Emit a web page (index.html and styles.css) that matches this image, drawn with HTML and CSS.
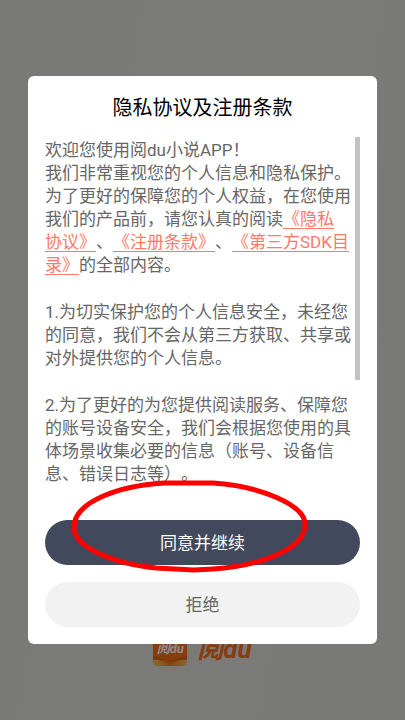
FILE: index.html
```
<!DOCTYPE html>
<html lang="zh-CN">
<head>
	<meta charset="UTF-8">
	<meta name="viewport" content="width=device-width, initial-scale=1">
	<title>阅du</title>
	<link rel="stylesheet" href="styles.css">
</head>
<body>
	<div class="splash">
		<div class="brand">
			<div class="brand_icon">
				<svg class="brand_shape" viewBox="0 0 34 34" aria-hidden="true">
					<defs>
						<linearGradient id="gold" x1="0" x2="1" y1="0" y2="0">
							<stop offset="0" stop-color="#ffc040"/>
							<stop offset=".5" stop-color="#e8842c"/>
							<stop offset="1" stop-color="#ffc040"/>
						</linearGradient>
					</defs>
					<rect width="34" height="34" rx="6" fill="#f5701e"/>
					<path d="M0 24 Q9 25 17 30 Q25 25 34 24 V28 H0 Z" fill="#e0621c"/>
					<path d="M0 28 Q9 27 17 33 Q25 27 34 28 Q34 34 28 34 H6 Q0 34 0 28 Z" fill="url(#gold)"/>
				</svg>
				<span class="brand_small">阅du</span>
			</div>
			<span class="brand_name">阅du</span>
		</div>
	</div>

	<div class="mask">
		<div class="dialog" role="dialog" aria-labelledby="title">
			<h1 class="title" id="title">隐私协议及注册条款</h1>
			<div class="policy">
				<div class="policy_text">
					<p>欢迎您使用阅du小说APP！<br>
					我们非常重视您的个人信息和隐私保护。<br>
					为了更好的保障您的个人权益，在您使用我们的产品前，请您认真的阅读<a href="#">《隐私<br>协议》</a>、<a href="#">《注册条款》</a>、<a href="#">《第三方SDK目录》</a>的全部内容。</p>
					<p>1.为切实保护您的个人信息安全，未经您的同意，我们不会从第三方获取、共享或对外提供您的个人信息。</p>
					<p>2.为了更好的为您提供阅读服务、保障您的账号设备安全，我们会根据您使用的具体场景收集必要的信息（账号、设备信息、错误日志等）。</p>
				</div>
				<div class="policy_bar"></div>
			</div>
			<div class="buttons">
				<div class="agree_wrap">
					<button type="button" class="btn agree">同意并继续</button>
					<svg class="circle" width="240" height="96" viewBox="0 0 240 96" aria-hidden="true">
						<path d="M94 5 H143 C190 8 235 27 235 46 C236 72 188 88 143 91 L124 92 L86 90 C38 85 4 67 4 50 C3 25 46 8 94 5 Z"/>
					</svg>
				</div>
				<button type="button" class="btn refuse">拒绝</button>
			</div>
		</div>
	</div>
</body>
</html>
```

FILE: styles.css
```
* {
	box-sizing: border-box;
}
body {
	margin: 0;
	font-family: Roboto, "Noto Sans CJK SC", sans-serif;
	font-size: 17px;
	line-height: 23px;
	color: #666;
	text-spacing-trim: space-all;
}
.splash {
	display: flex;
	flex-direction: column;
	justify-content: flex-end;
	align-items: center;
	min-height: 100vh;
	padding-bottom: 54px;
	background: linear-gradient(100deg, #dcdcd6, #dfdfda 50%, #dcdcda);
}
.brand {
	display: flex;
	align-items: center;
	gap: 10px;
	font-style: italic;
	font-weight: bold;
}
.brand_icon {
	position: relative;
	width: 34px;
	height: 34px;
}
.brand_shape {
	display: block;
	width: 100%;
}
.brand_small {
	position: absolute;
	top: 0;
	left: 0;
	width: 100%;
	text-align: center;
	font-size: 13px;
	line-height: 34px;
	color: #fff;
}
.brand_name {
	font-size: 26px;
	line-height: 34px;
	color: #f5701e;
}
.mask {
	position: fixed;
	inset: 0;
	display: flex;
	align-items: center;
	padding: 0 28px;
	background: rgba(0, 0, 0, .45);
}
.dialog {
	width: 100%;
	padding: 17px;
	border-radius: 6px;
	background: #fff;
}
.title {
	margin: 0 0 14px;
	font-size: 20px;
	font-weight: normal;
	line-height: 30px;
	text-align: center;
	color: #000;
}
.policy {
	display: flex;
	gap: 2px;
	height: 347px;
	overflow: hidden;
}
.policy_text {
	flex: 1;
	padding-top: 2px;
}
.policy_text p {
	margin: 0 0 24px;
}
.policy_text a {
	color: #ff7868;
	text-underline-offset: 3px;
	text-decoration-thickness: 1px;
}
.policy_bar {
	width: 5px;
	height: 70%;
	background: #c2c2c2;
}
.buttons {
	display: flex;
	flex-direction: column;
	gap: 17px;
	margin-top: 36px;
}
.agree_wrap {
	position: relative;
}
.btn {
	display: block;
	width: 100%;
	height: 45px;
	padding: 0 0 2px;
	border: 0;
	border-radius: 23px;
	font-family: inherit;
	font-size: 17px;
}
.agree {
	background: #43495d;
	color: #fff;
}
.refuse {
	background: #f2f2f2;
	color: #666;
}
.circle {
	position: absolute;
	top: -42px;
	left: 25px;
	fill: none;
	stroke: #f00;
	stroke-width: 5;
	pointer-events: none;
}
```
